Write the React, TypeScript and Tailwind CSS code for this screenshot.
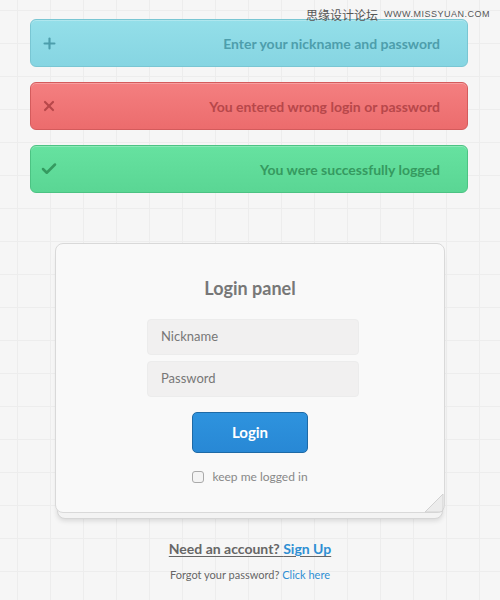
import { Plus, X, Check } from 'lucide-react';

const alerts = [
  {
    text: 'Enter your nickname and password',
    box: 'bg-[linear-gradient(#94dfe9,#86d5e2)] border-[#79c6d3]',
    tone: 'text-[#4d9eac]',
    icon: <Plus size={17} strokeWidth={3} />,
  },
  {
    text: 'You entered wrong login or password',
    box: 'bg-[linear-gradient(#f47f80,#ec6c6d)] border-[#d45b5c]',
    tone: 'text-[#b7474a]',
    icon: <X size={16} strokeWidth={3.2} />,
  },
  {
    text: 'You were successfully logged',
    box: 'bg-[linear-gradient(#66e2a0,#5ad694)] border-[#4cc383]',
    tone: 'text-[#359a60]',
    icon: <Check size={18} strokeWidth={3.4} />,
  },
];

export default function App() {
  return (
    <main
      className="relative w-[500px] h-[600px] overflow-hidden bg-[#f6f6f6] bg-[linear-gradient(#ededed_1px,transparent_1px),linear-gradient(90deg,#ededed_1px,transparent_1px)] bg-[size:33px_33px] bg-[position:17px_10px] font-['Lato','Open_Sans',sans-serif]"
    >
      <div className="absolute top-[6px] right-[10px] flex items-center gap-[6px] text-[#555]">
        <span className="text-[12px] font-['Noto_Sans_CJK_SC',sans-serif]">思缘设计论坛</span>
        <span className="text-[9px] tracking-[0.5px] font-['Liberation_Sans',sans-serif]">WWW.MISSYUAN.COM</span>
      </div>

      <div className="flex flex-col gap-[15px] pt-[19px] ml-[30px] w-[438px]">
        {alerts.map((a, i) => (
          <div
            key={i}
            className={`h-[48px] rounded-[6px] border flex items-center justify-between pl-[9px] pr-[27px] shadow-[inset_0_1px_0_rgba(255,255,255,0.25)] ${a.box} ${a.tone}`}
          >
            <span className="w-[18px] flex justify-center">{a.icon}</span>
            <span className="text-[14px] font-bold">{a.text}</span>
          </div>
        ))}
      </div>

      <div className="relative ml-[55px] mt-[50px] w-[390px]">
        <div className="absolute left-[2px] right-[2px] top-[6px] h-[270px] rounded-[8px] border border-[#d6d6d6] bg-[#f3f3f3] shadow-[0_2px_5px_rgba(0,0,0,0.12)]" />
        <div className="relative h-[270px] rounded-[8px] border border-[#d9d9d9] bg-[#f9f9f9] flex flex-col items-center">
          <h1 className="mt-[31px] text-[18px] font-bold text-[#777]">Login panel</h1>
          <div className="mt-[17px] ml-[6px] flex flex-col gap-[6px]">
            <div className="w-[212px] h-[36px] rounded-[4px] bg-[#f1f0f0] border border-[#ececec] flex items-center pl-[13px] text-[13px] text-[#777]">
              Nickname
            </div>
            <div className="w-[212px] h-[36px] rounded-[4px] bg-[#f1f0f0] border border-[#ececec] flex items-center pl-[13px] text-[13px] text-[#777]">
              Password
            </div>
          </div>
          <button className="mt-[15px] w-[116px] h-[41px] rounded-[5px] bg-[linear-gradient(#2e93de,#2888d5)] border border-[#1e6aa6] text-white font-bold text-[15px]">
            Login
          </button>
          <div className="mt-[15px] flex items-center gap-[8px]">
            <span className="w-[12px] h-[12px] rounded-[3px] border border-[#aaa] bg-[#f4f4f4]" />
            <span className="text-[12px] text-[#888]">keep me logged in</span>
          </div>
          <svg className="absolute right-[0px] bottom-[-1px]" width="20" height="20" viewBox="0 0 20 20">
            <path d="M19 1 L1 19 L16 19 Q19 19 19 16 Z" fill="#ececec" stroke="#d2d2d2" />
          </svg>
        </div>
      </div>

      <div className="mt-[25px] flex flex-col items-center">
        <p className="text-[14px] font-bold text-[#666] underline underline-offset-2">
          Need an account? <span className="text-[#2f8fd3]">Sign Up</span>
        </p>
        <p className="mt-[8px] text-[11px] text-[#666]">
          Forgot your password? <span className="text-[#2f8fd3]">Click here</span>
        </p>
      </div>
    </main>
  );
}
